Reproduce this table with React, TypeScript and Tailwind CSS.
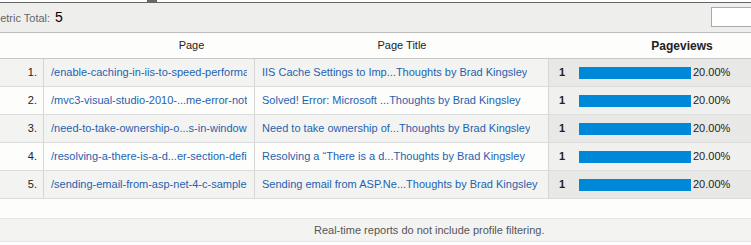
import React from "react";

type Row = {
  page: string;
  title: string;
  views: number;
  share: string;
};

const rows: Row[] = [
  {
    page: "/enable-caching-in-iis-to-speed-performance",
    title: "IIS Cache Settings to Imp...Thoughts by Brad Kingsley",
    views: 1,
    share: "20.00%",
  },
  {
    page: "/mvc3-visual-studio-2010-...me-error-not-found",
    title: "Solved! Error: Microsoft ...Thoughts by Brad Kingsley",
    views: 1,
    share: "20.00%",
  },
  {
    page: "/need-to-take-ownership-o...s-in-windows-7",
    title: "Need to take ownership of...Thoughts by Brad Kingsley",
    views: 1,
    share: "20.00%",
  },
  {
    page: "/resolving-a-there-is-a-d...er-section-defined",
    title: "Resolving a \u201cThere is a d...Thoughts by Brad Kingsley",
    views: 1,
    share: "20.00%",
  },
  {
    page: "/sending-email-from-asp-net-4-c-sample-code",
    title: "Sending email from ASP.Ne...Thoughts by Brad Kingsley",
    views: 1,
    share: "20.00%",
  },
];

const cols = "grid grid-cols-[44px_211px_294px_1fr]";

export default function App() {
  return (
    <div className="w-[751px] h-[245px] overflow-hidden bg-white font-['Liberation_Sans',Arial,sans-serif] text-[11px] text-[#222]">
      {/* top rule with the little tab */}
      <div className="h-[2px] bg-white">
        <div className="ml-[147px] w-[10px] h-[2px] bg-[#666]" />
      </div>
      <div className="h-px bg-[#666]" />

      {/* metric total bar */}
      <div className="h-[30px] bg-[#eeefed] border-b border-[#bbb] flex items-center justify-between">
        <div className="flex items-baseline ml-[-9px]">
          <span className="text-[#666] text-[11px]">Metric Total:</span>
          <span className="ml-[5px] text-[14px] text-black">5</span>
        </div>
        <div className="w-[40px] h-[20px] mt-[-2px] bg-white border border-[#aaa] border-r-0" />
      </div>

      {/* header */}
      <div className={`${cols} h-[26px] bg-[#fdfdfc] border-b border-[#c8c8c8]`}>
        <div className="col-span-2 flex items-center justify-center pl-[128px]">Page</div>
        <div className="flex items-center justify-center">Page Title</div>
        <div className="flex items-center justify-center pl-[64px] font-bold text-[12px]">
          Pageviews
        </div>
      </div>

      {/* rows */}
      {rows.map((r, i) => {
        const odd = i % 2 === 0;
        return (
          <div
            key={i}
            className={`${cols} h-[28px] border-b border-[#dcdcdc] ${
              odd ? "bg-[#f3f4f2]" : "bg-[#fdfdfc]"
            }`}
          >
            <div className="flex items-center justify-end pr-[6px] border-r border-[#d6d6d6]">
              {i + 1}.
            </div>
            <div className="flex items-center px-[7px] border-r border-[#d6d6d6] min-w-0">
              <span className="block overflow-hidden whitespace-nowrap text-[#1e62b0]">
                {r.page}
              </span>
            </div>
            <div className="flex items-center px-[7px] border-r border-[#d6d6d6] min-w-0">
              <span className="block overflow-hidden whitespace-nowrap text-[#1e62b0]">
                {r.title}
              </span>
            </div>
            <div
              className={`flex items-center pl-[10px] ${
                odd ? "bg-[#e8e9e7]" : "bg-[#f0f1ef]"
              }`}
            >
              <span className="w-[20px] font-bold">{r.views}</span>
              <span className="w-[112px] h-[12px] bg-[#0088d8]" />
              <span className="ml-[2px]">{r.share}</span>
            </div>
          </div>
        );
      })}

      <div className="h-[19px] bg-[#fdfdfc]" />

      {/* footer note */}
      <div className="h-[24px] bg-[#f3f4f2] border-t border-[#e6e6e6] border-b border-[#cfcfcf] flex items-center pl-[314px] text-[#555]">
        Real-time reports do not include profile filtering.
      </div>
    </div>
  );
}
